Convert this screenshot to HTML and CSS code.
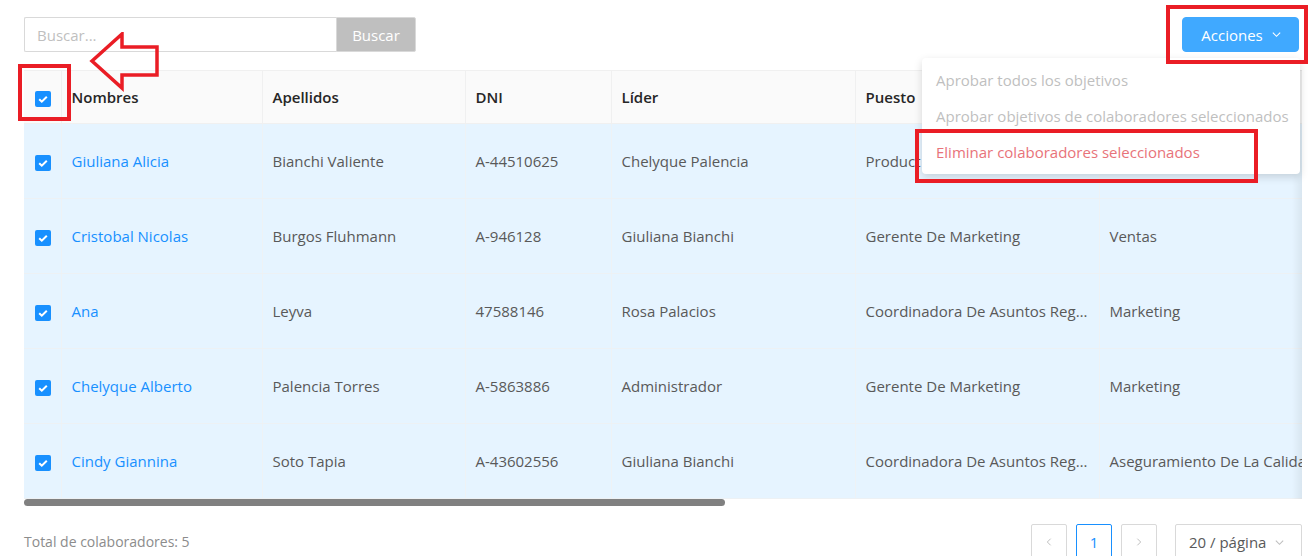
FILE: index.html
```html
<!DOCTYPE html>
<html lang="es">
<head>
    <meta charset="UTF-8">
    <title>Colaboradores</title>
    <link rel="stylesheet" href="styles.css">
</head>
<body>
    <div class="page">
        <div class="toolbar">
            <div class="search">
                <input type="text" class="search-input" placeholder="Buscar...">
                <button class="search-btn">Buscar</button>
            </div>
            <div class="actions">
                <button class="actions-btn">Acciones
                    <svg class="chev" viewBox="0 0 12 12" width="11" height="11"><path d="M2 4l4 4 4-4" fill="none" stroke="#fff" stroke-width="1.2"/></svg>
                </button>
                <ul class="menu">
                    <li class="disabled">Aprobar todos los objetivos</li>
                    <li class="disabled">Aprobar objetivos de colaboradores seleccionados</li>
                    <li class="danger">Eliminar colaboradores seleccionados</li>
                </ul>
                <div class="mark mark-actions"></div>
                <div class="mark mark-delete"></div>
            </div>
        </div>

        <div class="table-wrap">
            <div class="table-scroll">
                <table class="grid">
                    <colgroup>
                        <col style="width:37px"><col style="width:201px"><col style="width:203px"><col style="width:146px"><col style="width:244px"><col style="width:244px"><col style="width:260px">
                    </colgroup>
                    <thead>
                        <tr>
                            <th class="sel"><span class="check"><svg viewBox="0 0 16 16"><path d="M4.2 8.2l2.6 2.5 5-5" fill="none" stroke="#fff" stroke-width="2"/></svg></span></th>
                            <th>Nombres</th>
                            <th>Apellidos</th>
                            <th>DNI</th>
                            <th>Líder</th>
                            <th>Puesto</th>
                            <th>Área</th>
                        </tr>
                    </thead>
                    <tbody id="rows"></tbody>
                </table>
            </div>
            <div class="shadow-right"></div>
            <div class="scrollbar"><div class="thumb"></div></div>
            <div class="mark mark-check"></div>
            <svg class="arrow" width="76" height="66" viewBox="0 0 76 66"><polygon points="4,29 34,2 34,15 69,15 69,43 34,43 34,56" fill="none" stroke="#ea1d25" stroke-width="3.5"/></svg>
        </div>

        <div class="footer">
            <div class="total">Total de colaboradores: 5</div>
            <div class="pager">
                <span class="pg-btn"><svg viewBox="0 0 12 12" width="10" height="10"><path d="M8 2L4 6l4 4" fill="none" stroke="#bfbfbf" stroke-width="1.2"/></svg></span>
                <span class="pg-btn active">1</span>
                <span class="pg-btn"><svg viewBox="0 0 12 12" width="10" height="10"><path d="M4 2l4 4-4 4" fill="none" stroke="#bfbfbf" stroke-width="1.2"/></svg></span>
                <span class="pg-size">20 / página <svg viewBox="0 0 12 12" width="11" height="11"><path d="M2 4l4 4 4-4" fill="none" stroke="#bfbfbf" stroke-width="1.2"/></svg></span>
            </div>
        </div>
    </div>
    <script>
        const people = [
            ['Giuliana Alicia', 'Bianchi Valiente', 'A-44510625', 'Chelyque Palencia', 'Product Owner', 'Producto'],
            ['Cristobal Nicolas', 'Burgos Fluhmann', 'A-946128', 'Giuliana Bianchi', 'Gerente De Marketing', 'Ventas'],
            ['Ana', 'Leyva', '47588146', 'Rosa Palacios', 'Coordinadora De Asuntos Regulatorios', 'Marketing'],
            ['Chelyque Alberto', 'Palencia Torres', 'A-5863886', 'Administrador', 'Gerente De Marketing', 'Marketing'],
            ['Cindy Giannina', 'Soto Tapia', 'A-43602556', 'Giuliana Bianchi', 'Coordinadora De Asuntos Regulatorios', 'Aseguramiento De La Calidad']
        ];
        const tick = '<span class="check"><svg viewBox="0 0 16 16"><path d="M4.2 8.2l2.6 2.5 5-5" fill="none" stroke="#fff" stroke-width="2"/></svg></span>';
        document.getElementById('rows').innerHTML = people.map(p => `
            <tr>
                <td class="sel">${tick}</td>
                <td><a class="name">${p[0]}</a></td>
                <td>${p[1]}</td>
                <td>${p[2]}</td>
                <td>${p[3]}</td>
                <td class="ellipsis">${p[4]}</td>
                <td class="nowrap">${p[5]}</td>
            </tr>`).join('');
    </script>
</body>
</html>
```

FILE: styles.css
```css
body {
    margin: 0;
    font-family: "Open Sans", "Noto Sans", sans-serif;
    font-size: 15px;
    color: #595959;
    background: #fff;
    overflow: hidden;
}
.page {
    padding: 17px 8px 0 24px;
}
.toolbar {
    display: flex;
    justify-content: space-between;
    align-items: flex-start;
    height: 35px;
}
.search {
    display: flex;
}
.search-input {
    width: 312px;
    height: 35px;
    box-sizing: border-box;
    border: 1px solid #d9d9d9;
    border-right: none;
    border-radius: 2px 0 0 2px;
    padding: 0 12px;
    font: inherit;
    color: #595959;
    outline: none;
}
.search-input::placeholder {
    color: #bfbfbf;
}
.search-btn {
    width: 80px;
    height: 35px;
    border: 1px solid #d9d9d9;
    background: #bfbfbf;
    color: #fff;
    font: inherit;
    border-radius: 0 2px 2px 0;
}
.actions {
    position: relative;
}
.actions-btn {
    width: 117px;
    height: 35px;
    margin-right: 3px;
    background: #40a9ff;
    border: 1px solid #40a9ff;
    border-radius: 4px;
    color: #fff;
    font: inherit;
    display: flex;
    align-items: center;
    justify-content: center;
    gap: 8px;
    padding: 0 0 0 2px;
}
.menu {
    position: absolute;
    top: 41px;
    right: 2px;
    width: 378px;
    margin: 0;
    padding: 4px 0;
    list-style: none;
    background: #fff;
    border-radius: 4px;
    box-shadow: 0 3px 8px rgba(0, 0, 0, 0.15);
    z-index: 5;
}
.menu li {
    height: 36px;
    line-height: 36px;
    padding: 0 14px;
    white-space: nowrap;
}
.menu .disabled {
    color: #bfbfbf;
}
.menu .danger {
    color: #e8737a;
}
.mark {
    position: absolute;
    border: 4px solid #ea1d25;
    box-sizing: border-box;
    z-index: 6;
}
.mark-actions {
    top: -12px;
    right: -6px;
    width: 142px;
    height: 59px;
}
.mark-delete {
    top: 112px;
    right: 44px;
    width: 343px;
    height: 54px;
}
.mark-check {
    top: -6px;
    left: -6px;
    width: 53px;
    height: 57px;
}
.arrow {
    position: absolute;
    top: -38px;
    left: 64px;
}
.table-wrap {
    position: relative;
    margin-top: 18px;
    width: 1278px;
}
.table-scroll {
    overflow: hidden;
}
.grid {
    border-collapse: collapse;
    table-layout: fixed;
    width: 1335px;
}
.grid th {
    background: #fafafa;
    color: #262626;
    font-weight: 600;
    text-align: left;
    height: 53px;
    padding: 0 10px;
    border-left: 1px solid #f0f0f0;
    border-top: 1px solid #f0f0f0;
    border-bottom: 1px solid #f0f0f0;
    box-sizing: border-box;
}
.grid td {
    background: #e6f4ff;
    height: 75px;
    padding: 0 10px;
    border-left: 1px solid #eef2f5;
    border-bottom: 1px solid #edf1f4;
    box-sizing: border-box;
    white-space: nowrap;
}
.grid th:first-child,
.grid td:first-child {
    border-left: none;
}
.grid .sel {
    padding: 0 0 0 11px;
}
.ellipsis {
    overflow: hidden;
    text-overflow: ellipsis;
}
.nowrap {
    overflow: hidden;
}
.name {
    color: #1890ff;
}
.check {
    display: inline-block;
    width: 16px;
    height: 16px;
    background: #1890ff;
    border-radius: 2px;
    vertical-align: middle;
}
.check svg {
    display: block;
    width: 16px;
    height: 16px;
}
.shadow-right {
    position: absolute;
    top: 0;
    right: 0;
    width: 10px;
    height: 429px;
    background: linear-gradient(to left, rgba(0, 0, 0, 0.06), rgba(0, 0, 0, 0));
}
.scrollbar {
    height: 7px;
}
.thumb {
    width: 701px;
    height: 7px;
    background: #808080;
    border-radius: 4px;
}
.footer {
    display: flex;
    justify-content: space-between;
    align-items: flex-start;
    margin-top: 18px;
    width: 1278px;
}
.total {
    font-size: 14px;
    color: #8c8c8c;
    margin-top: 8px;
}
.pager {
    display: flex;
    gap: 9px;
}
.pg-btn {
    width: 36px;
    height: 36px;
    box-sizing: border-box;
    border: 1px solid #d9d9d9;
    border-radius: 2px;
    display: flex;
    align-items: center;
    justify-content: center;
    color: #1890ff;
}
.pg-btn.active {
    border-color: #1890ff;
}
.pg-size {
    margin-left: 9px;
    width: 127px;
    height: 36px;
    box-sizing: border-box;
    border: 1px solid #d9d9d9;
    border-radius: 2px;
    display: flex;
    align-items: center;
    gap: 8px;
    padding-left: 13px;
    color: #595959;
}
```
